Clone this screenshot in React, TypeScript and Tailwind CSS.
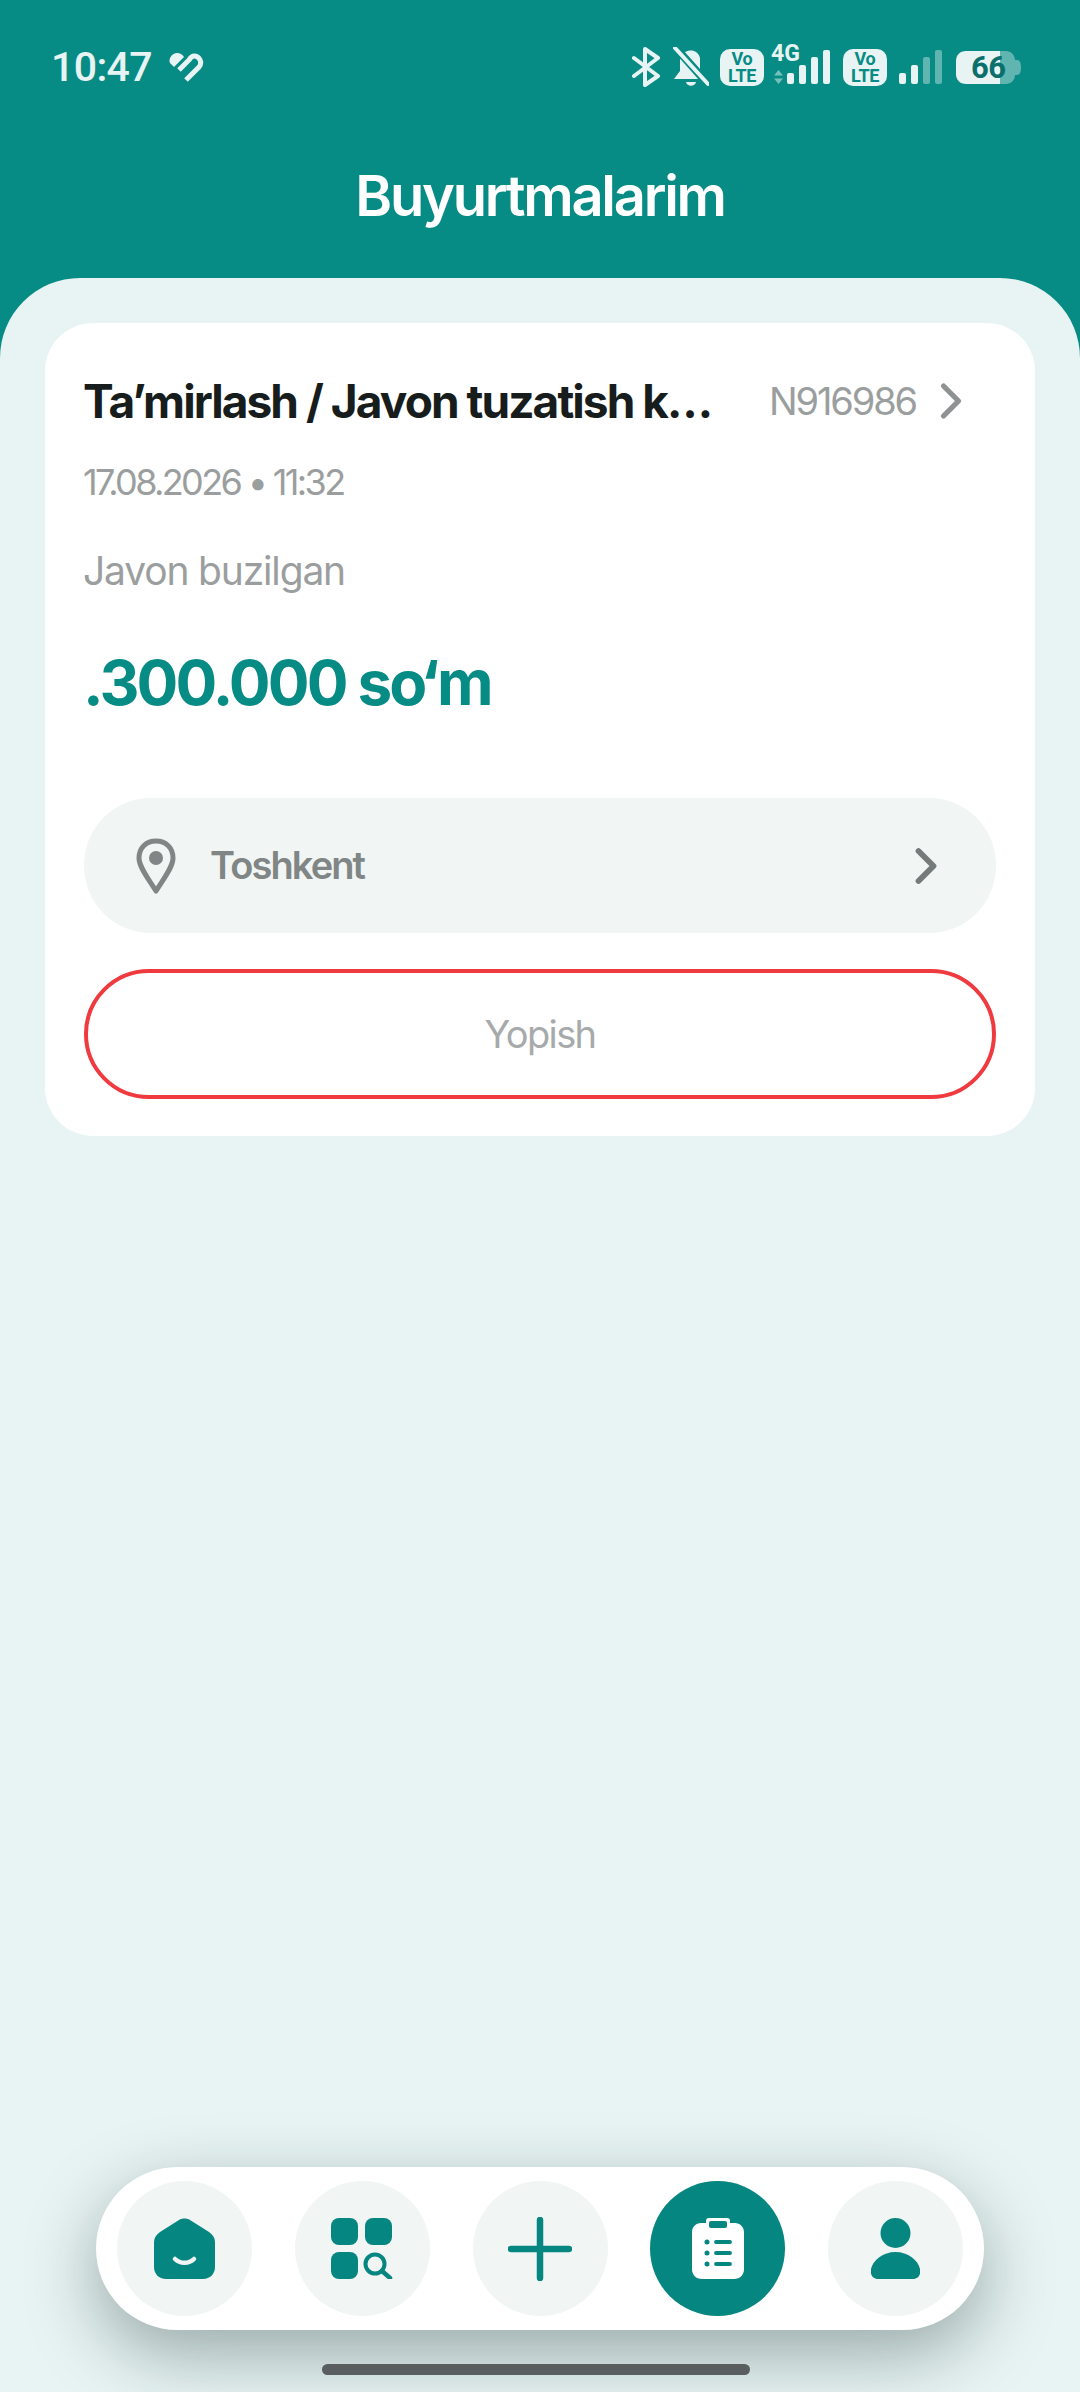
import { ChevronRight } from "lucide-react";

const font = { fontFamily: "Inter, 'Liberation Sans', sans-serif" };

function VolteBadge() {
  return (
    <div className="flex h-[37px] w-[44px] flex-col items-center justify-center rounded-[10px] bg-[#E7F4F3] font-['Roboto',sans-serif] text-[18px] font-bold leading-[17px] tracking-[-0.02em] text-[#078B85]">
      <span>Vo</span>
      <span>LTE</span>
    </div>
  );
}

function SignalBars({ dim }: { dim?: boolean }) {
  return (
    <svg width="43" height="34" viewBox="0 0 43 34" fill="#E7F4F3">
      <rect x="0" y="23" width="7" height="11" rx="2" />
      <rect x="12" y="15" width="7" height="19" rx="2" />
      <rect x="24" y="7" width="7" height="27" rx="2" opacity={dim ? 0.4 : 1} />
      <rect x="36" y="0" width="7" height="34" rx="2" opacity={dim ? 0.4 : 1} />
    </svg>
  );
}

function StatusBar() {
  return (
    <div className="flex h-[134px] items-center pl-[51px] pr-[59px] text-[#E7F4F3]">
      <span className="font-['Roboto',sans-serif] text-[41px] font-medium leading-none tracking-[-0.015em]">10:47</span>
      <svg className="ml-[17px]" width="35" height="29" viewBox="0 0 35 29" fill="none">
        <path d="M5 14 L1 10 C-1 6 3 0 8 0 C11 0 13 1 15 4 Z" fill="#E7F4F3" />
        <path d="M17 27 L30 14 C34 9 30 3 25 3 C23 3 22 4 20 7 L10 17" stroke="#E7F4F3" strokeWidth="5" />
      </svg>

      <div className="ml-auto flex items-center">
        <svg width="28" height="40" viewBox="0 0 28 40" fill="none" stroke="#E7F4F3" strokeWidth="4" strokeLinecap="round" strokeLinejoin="round">
          <path d="M2 11 L26 29 L13 38 V2 L26 11 L2 29" />
        </svg>
        <svg className="ml-[13px]" width="36" height="40" viewBox="0 0 36 40">
          <path d="M9 8 C12 3 24 0 27 11 V24 L33 32 H1 L7 24 V12 Z" fill="#E7F4F3" />
          <path d="M13 35 H23 C22 40 14 40 13 35 Z" fill="#E7F4F3" />
          <path d="M2 0 L35 37" stroke="#078B85" strokeWidth="8" />
          <path d="M2 1 L35 37" stroke="#E7F4F3" strokeWidth="4" strokeLinecap="round" />
        </svg>
        <div className="ml-[11px]">
          <VolteBadge />
        </div>
        <div className="relative ml-[7px] h-[38px] w-[59px]">
          <span className="absolute left-0 top-[-4px] font-['Roboto',sans-serif] text-[23px] font-bold leading-[20px]">4G</span>
          <svg className="absolute left-[3px] top-[22px]" width="9" height="14" viewBox="0 0 9 14" fill="#E7F4F3" opacity="0.5">
            <path d="M4.5 0 L9 5.5 H0 Z M0 8.5 H9 L4.5 14 Z" />
          </svg>
          <div className="absolute left-[16px] top-[2px]">
            <SignalBars />
          </div>
        </div>
        <div className="ml-[13px]">
          <VolteBadge />
        </div>
        <div className="ml-[12px]">
          <SignalBars dim />
        </div>
        <div className="relative ml-[14px] h-[33px] w-[65px]">
          <svg className="absolute left-0 top-0" width="65" height="33" viewBox="0 0 65 33" fill="#E7F4F3">
            <path d="M10 0 H44 V33 H10 C4 33 0 29 0 23 V10 C0 4 4 0 10 0 Z" />
            <path d="M44 0 H50 C55 0 59 4 59 9 H61 C64 9 65 12 65 16.5 C65 21 64 24 61 24 H59 C59 29 55 33 50 33 H44 Z" opacity="0.4" />
          </svg>
          <span className="absolute left-[15px] top-0 font-['Roboto',sans-serif] text-[31px] font-bold leading-[33px] tracking-[-0.02em] text-[#0B6F6C]">66</span>
        </div>
      </div>
    </div>
  );
}

function OrderCard() {
  return (
    <div className="rounded-[48px] bg-white px-[39px] pb-[37px] pt-[50px]">
      <div className="-ml-[1px] flex h-[56px] items-center">
        <h2 className="w-[640px] whitespace-nowrap text-[46px] font-bold leading-[56px] tracking-[-0.042em] text-[#171C1C]">
          Ta’mirlash / Javon tuzatish k…
        </h2>
        <span className="ml-[46px] text-[38px] leading-none tracking-[-0.056em] text-[#9B9E9E]">N916986</span>
        <ChevronRight className="ml-[5px] shrink-0 text-[#8E9292]" size={60} strokeWidth={2.1} />
      </div>
      <p className="-ml-[1px] mt-[31px] text-[36px] leading-[44px] tracking-[-0.073em] text-[#9B9E9E]">17.08.2026 • 11:32</p>
      <p className="-ml-[1px] mt-[43px] text-[39px] leading-[48px] tracking-[-0.03em] text-[#9B9E9E]">Javon buzilgan</p>
      <p className="-ml-[1px] mt-[50px] text-[62px] font-bold leading-[76px] tracking-[-0.046em] text-[#078B85]">.300.000 so‘m</p>

      <div className="mt-[77px] flex h-[135px] items-center rounded-[67px] bg-[#F1F5F4] pl-[52px] pr-[40px]">
        <svg width="40" height="56" viewBox="0 0 40 56" fill="none">
          <path d="M20 53 C12 40 3 29 3 20 C3 10 10 3 20 3 C30 3 37 10 37 20 C37 29 28 40 20 53 Z" stroke="#808585" strokeWidth="5" strokeLinejoin="round" />
          <circle cx="20" cy="20" r="7" fill="#808585" />
        </svg>
        <span className="ml-[34px] text-[38px] font-semibold tracking-[-0.05em] text-[#808585]">Toshkent</span>
        <ChevronRight className="ml-auto shrink-0 text-[#757A7A]" size={60} strokeWidth={2.3} />
      </div>

      <button className="mt-[36px] flex h-[130px] w-full items-center justify-center rounded-[65px] border-[4px] border-[#EF3B3F] bg-white text-[38px] tracking-[-0.043em] text-[#A6AAAA]">
        Yopish
      </button>
    </div>
  );
}

function HomeIcon() {
  return (
    <svg width="61" height="61" viewBox="0 0 61 61">
      <path d="M25 2 C28 0 33 0 36 2 L55 14 C59 17 61 20 61 25 V49 C61 56 56 61 49 61 H12 C5 61 0 56 0 49 V25 C0 20 2 17 6 14 Z" fill="#068680" />
      <path d="M21 41 C26 46 35 46 40 41" fill="none" stroke="#F1F5F4" strokeWidth="4.5" strokeLinecap="round" />
    </svg>
  );
}

function CatalogIcon() {
  return (
    <svg width="62" height="61" viewBox="0 0 62 61">
      <rect x="0" y="0" width="27" height="27" rx="8" fill="#068680" />
      <rect x="34" y="0" width="27" height="27" rx="8" fill="#068680" />
      <rect x="0" y="34" width="27" height="27" rx="8" fill="#068680" />
      <circle cx="44" cy="46" r="9.5" fill="none" stroke="#068680" strokeWidth="4" />
      <path d="M51 53 L59 60" stroke="#068680" strokeWidth="4.5" strokeLinecap="round" />
    </svg>
  );
}

function PlusIcon() {
  return (
    <svg width="64" height="64" viewBox="0 0 64 64">
      <path d="M32 3 V61 M3 32 H61" stroke="#068680" strokeWidth="6.5" strokeLinecap="round" />
    </svg>
  );
}

function OrdersIcon() {
  return (
    <svg width="52" height="61" viewBox="0 0 52 61">
      <path d="M14 3 C14 1 15 0 17 0 H35 C37 0 38 1 38 3 V5 H43 C48 5 52 9 52 14 V51 C52 57 48 61 42 61 H10 C4 61 0 57 0 51 V14 C0 9 4 5 9 5 H14 Z" fill="#fff" />
      <rect x="17" y="3" width="18" height="7" rx="2" fill="#068680" />
      <circle cx="15" cy="24" r="2.5" fill="#068680" />
      <circle cx="15" cy="35" r="2.5" fill="#068680" />
      <circle cx="15" cy="46" r="2.5" fill="#068680" />
      <path d="M24 24 H38 M24 35 H38 M24 46 H38" stroke="#068680" strokeWidth="3.8" strokeLinecap="round" />
    </svg>
  );
}

function ProfileIcon() {
  return (
    <svg width="49" height="61" viewBox="0 0 49 61">
      <circle cx="24.5" cy="15" r="15" fill="#068680" />
      <path d="M24.5 34 C37 34 47 42 49 51 C50 57 47 61 42 61 H7 C2 61 -1 57 0 51 C2 42 12 34 24.5 34 Z" fill="#068680" />
    </svg>
  );
}

function BottomNav() {
  return (
    <div className="absolute bottom-[62px] left-[96px] flex h-[163px] w-[888px] items-center justify-between rounded-[82px] bg-white px-[21px] shadow-[0_24px_70px_rgba(0,25,25,0.34)]">
      <div className="flex h-[135px] w-[135px] items-center justify-center rounded-full bg-[#F1F5F4]">
        <HomeIcon />
      </div>
      <div className="flex h-[135px] w-[135px] items-center justify-center rounded-full bg-[#F1F5F4]">
        <CatalogIcon />
      </div>
      <div className="flex h-[135px] w-[135px] items-center justify-center rounded-full bg-[#F1F5F4]">
        <PlusIcon />
      </div>
      <div className="flex h-[135px] w-[135px] items-center justify-center rounded-full bg-[#068680]">
        <OrdersIcon />
      </div>
      <div className="flex h-[135px] w-[135px] items-center justify-center rounded-full bg-[#F1F5F4]">
        <ProfileIcon />
      </div>
    </div>
  );
}

export default function App() {
  return (
    <div className="relative flex h-[2392px] w-[1080px] flex-col overflow-hidden bg-[#078B85]" style={font}>
      <StatusBar />
      <h1 className="mb-[20px] flex h-[124px] items-center justify-center text-[56px] font-semibold tracking-[-0.04em] text-white">
        Buyurtmalarim
      </h1>
      <main className="flex-1 rounded-t-[80px] bg-[#E7F4F3] px-[45px] pt-[45px]">
        <OrderCard />
      </main>
      <BottomNav />
      <div className="absolute bottom-[17px] left-[322px] h-[11px] w-[428px] rounded-full bg-[#5A5E5E]" />
    </div>
  );
}
